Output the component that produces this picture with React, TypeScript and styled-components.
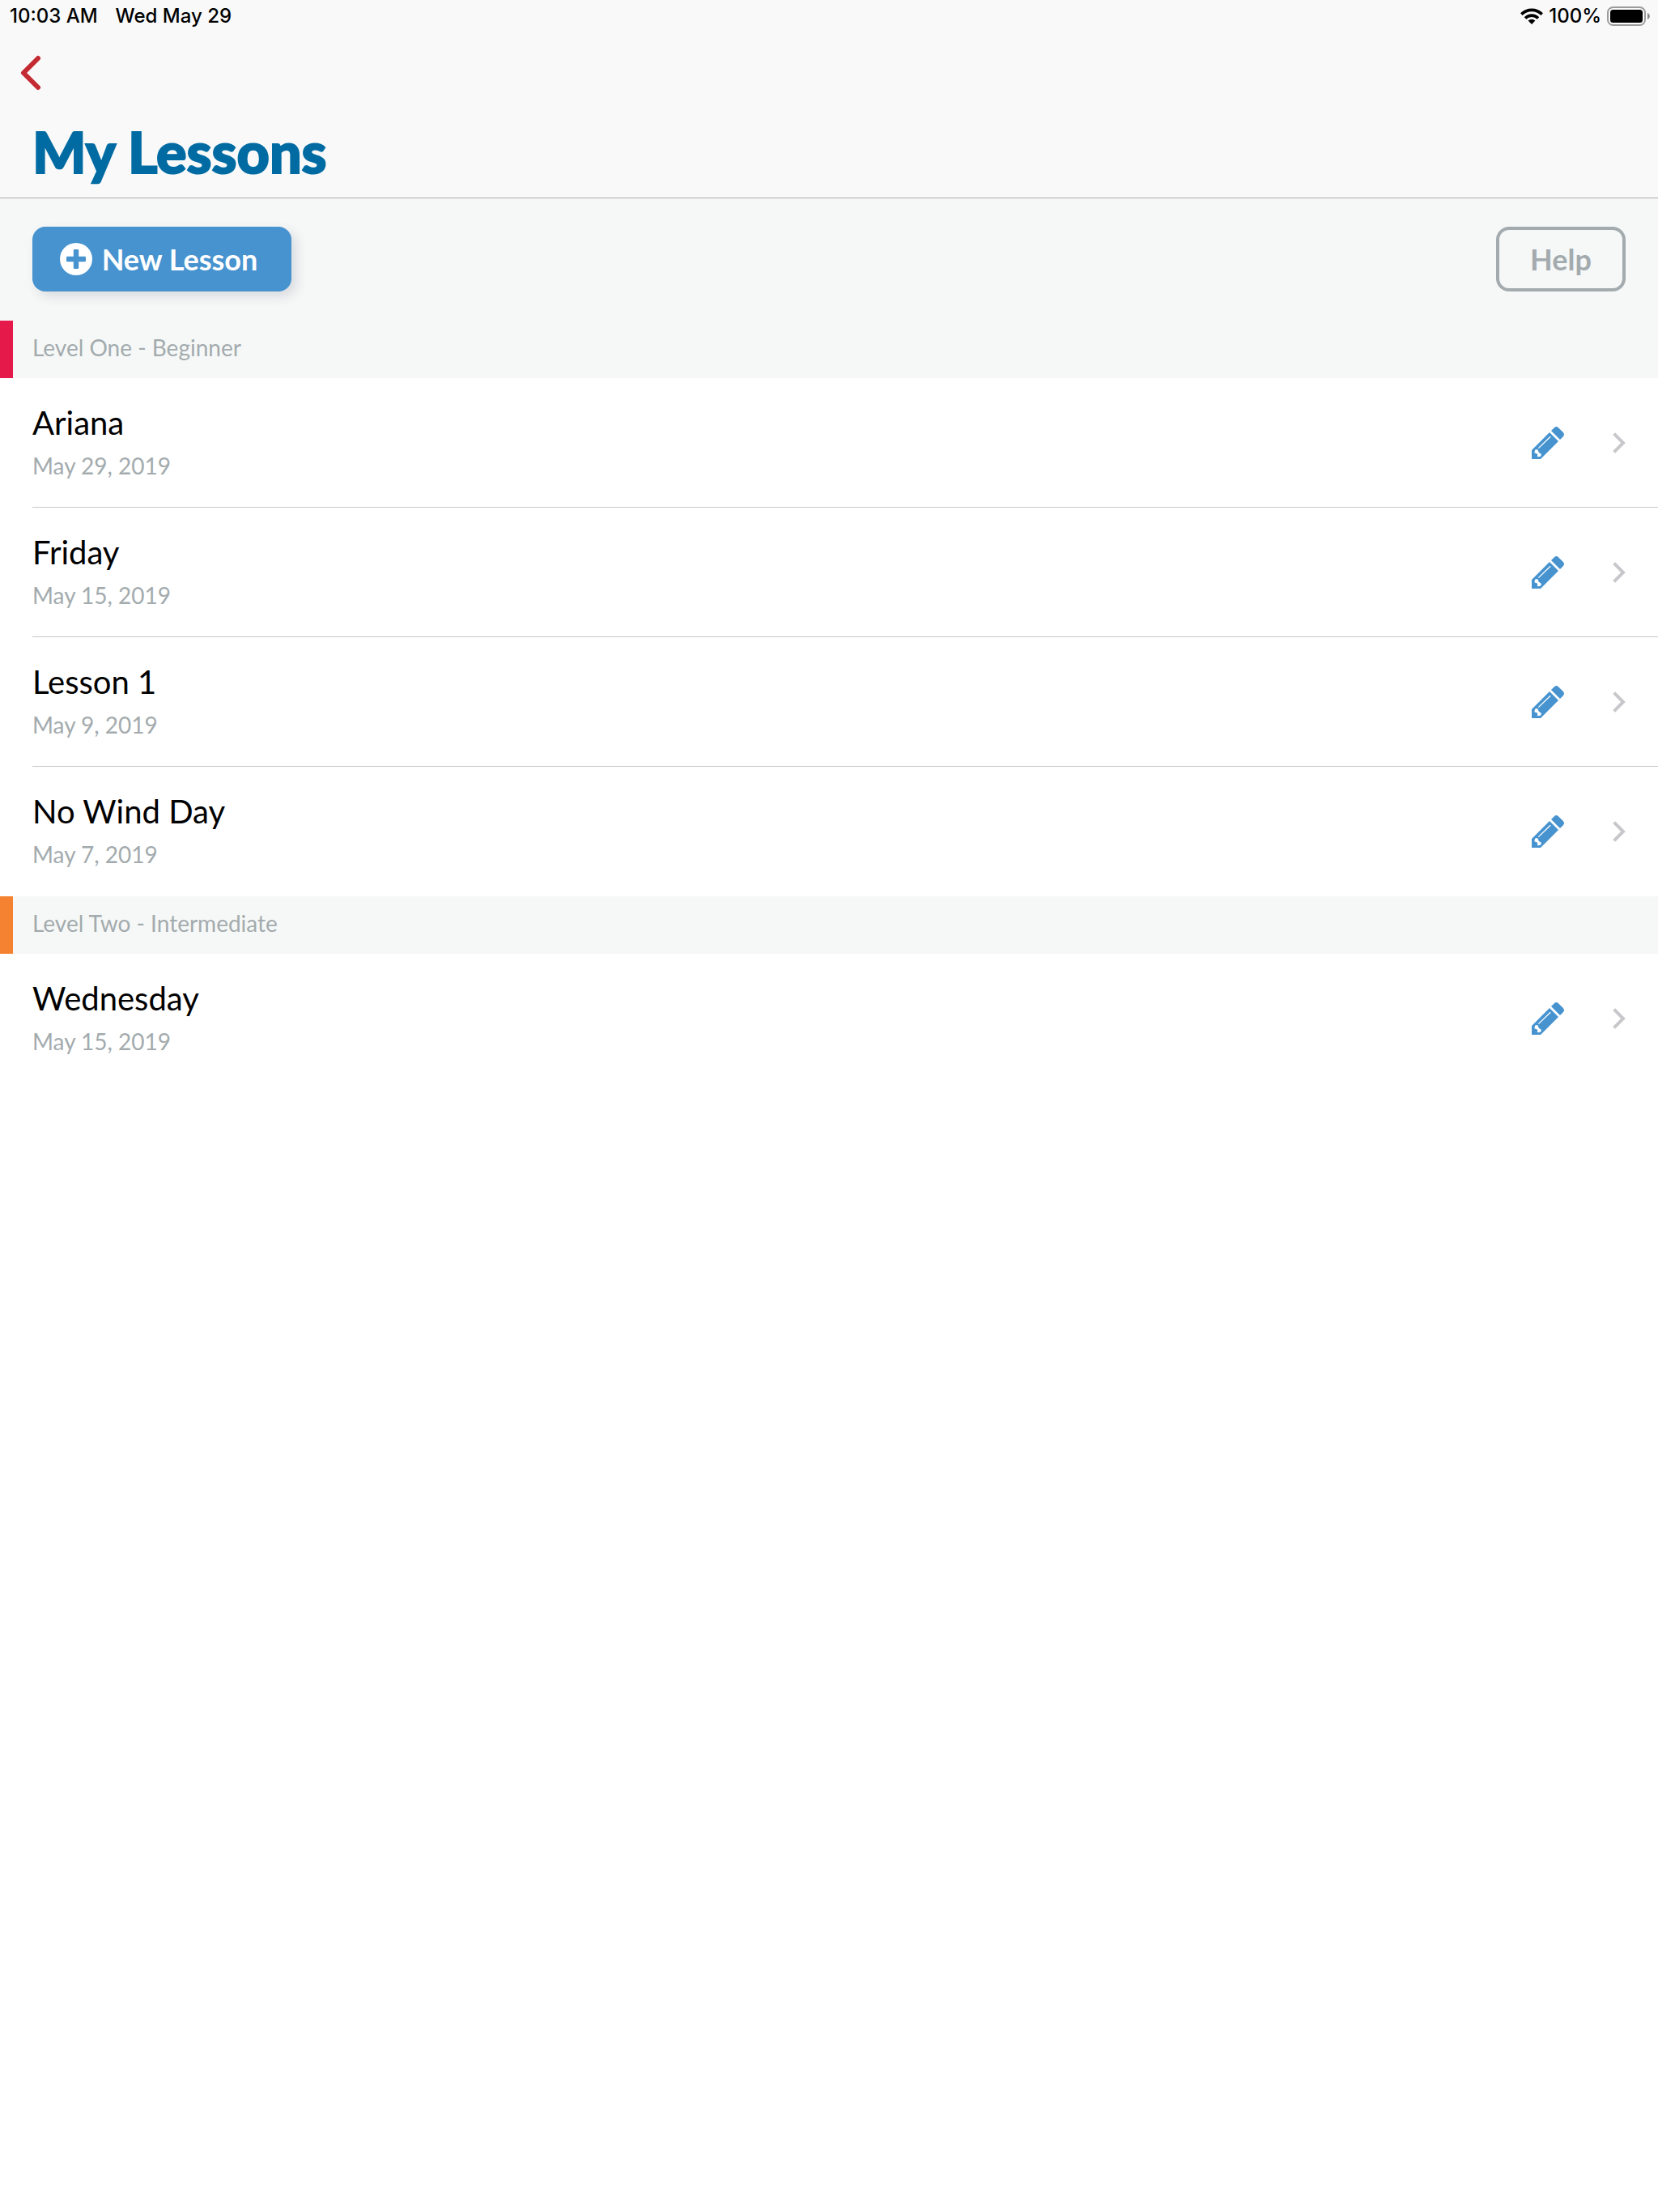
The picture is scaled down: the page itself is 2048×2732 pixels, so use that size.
import React from "react";
import styled, { createGlobalStyle } from "styled-components";

const ink = "#000000";
const muted = "#a3abae";
const blue = "#4693cf";
const mist = "#f6f8f7";

const GlobalStyle = createGlobalStyle`
  *, *::before, *::after { box-sizing: border-box; }
  html, body { margin: 0; padding: 0; background: #ffffff; }
  body { font-family: Lato, "Open Sans", sans-serif; color: ${ink}; }
  h1, h2, h3, p, ul { margin: 0; padding: 0; font-weight: inherit; }
  button { font: inherit; border: 0; padding: 0; background: none; cursor: pointer; }
  svg { display: block; flex: none; }
`;

const Page = styled.div`
  min-height: 100vh;
  background: #ffffff;
`;

const Header = styled.header`
  background: #f9f9f9;
  border-bottom: 1px solid #acacae;
`;

const StatusBar = styled.div`
  display: flex;
  align-items: center;
  justify-content: space-between;
  height: 40px;
  padding: 0 10px 0 12px;
  font-family: Inter, "Liberation Sans", sans-serif;
  font-size: 24px;
  font-weight: 500;
  line-height: 40px;
`;

const StatusGroup = styled.div<{ $gap: number }>`
  display: flex;
  align-items: center;
  gap: ${(p) => p.$gap}px;
`;

const BackButton = styled.button`
  display: flex;
  align-items: center;
  width: 80px;
  height: 100px;
  padding-left: 24px;
`;

const Title = styled.h1`
  padding: 7px 40px 17px;
  color: #006ba2;
  font-size: 70px;
  font-weight: 900;
  line-height: 80px;
  -webkit-text-stroke: 2px #006ba2;
`;

const Toolbar = styled.div`
  display: flex;
  justify-content: space-between;
  padding: 35px 40px 36px;
  background: ${mist};
`;

const ActionButton = styled.button`
  && {
    display: flex;
    align-items: center;
    justify-content: center;
    gap: 12px;
    height: 80px;
    border-radius: 16px;
    font-size: 36px;
    font-weight: 700;
    line-height: 40px;
  }
`;

const PrimaryButton = styled(ActionButton)`
  && {
    width: 320px;
    padding-right: 8px;
    background: ${blue};
    color: #ffffff;
    box-shadow: 6px 6px 14px rgba(60, 70, 100, 0.16);
  }
`;

const OutlineButton = styled(ActionButton)`
  && {
    width: 160px;
    border: 4px solid ${muted};
    color: ${muted};
  }
`;

const LevelHeading = styled.h2<{ $color: string }>`
  height: 71px;
  padding: 16px 24px;
  border-left: 16px solid ${(p) => p.$color};
  background: ${mist};
  color: ${muted};
  font-size: 28px;
  font-weight: 400;
  line-height: 34px;
`;

const LessonList = styled.ul`
  list-style: none;
  padding-left: 40px;
`;

const LessonRow = styled.li`
  display: flex;
  align-items: center;
  gap: 60px;
  height: 160px;
  padding-right: 40px;
  border-bottom: 1px solid #c8c7cc;
  &:last-child { border-bottom-color: transparent; }
`;

const LessonLink = styled.a`
  flex: 1;
  padding-bottom: 4px;
  color: inherit;
  text-decoration: none;
`;

const LessonName = styled.h3`
  font-size: 40px;
  font-weight: 400;
  line-height: 48px;
`;

const LessonDate = styled.p`
  margin-top: 12px;
  color: ${muted};
  font-size: 28px;
  font-weight: 400;
  line-height: 34px;
`;

const IconButton = styled.button`
  display: flex;
`;

const OpenLink = styled.a`
  display: flex;
`;

const BackIcon = () => (
  <svg width="28" height="44" viewBox="0 0 28 44" fill="none" stroke="#c42a31" strokeWidth="6" strokeLinecap="round" strokeLinejoin="round">
    <path d="M23 4 5 22l18 18" />
  </svg>
);

const WifiIcon = () => (
  <svg width="28" height="20" viewBox="0 0 28 20" fill="none" stroke="#000" strokeWidth="3.6">
    <path d="M1.3 7.6a18 18 0 0 1 25.4 0" />
    <path d="M6 12.4a11.3 11.3 0 0 1 16 0" />
    <path d="M14 20l-4.4-4.4a6.3 6.3 0 0 1 8.8 0z" fill="#000" stroke="none" />
  </svg>
);

const BatteryIcon = () => (
  <svg width="53" height="24" viewBox="0 0 53 24">
    <rect x="1" y="1" width="46" height="22" rx="6.5" fill="none" stroke="#9c9c9c" strokeWidth="2" />
    <rect x="4" y="4" width="40" height="16" rx="3.5" fill="#000" />
    <path d="M50 8c3.800 1.500 3.800 6.500 0 8z" fill="#8a8a8a" />
  </svg>
);

const PlusCircleIcon = () => (
  <svg width="40" height="40" viewBox="0 0 40 40">
    <circle cx="20" cy="20" r="20" fill="#fff" />
    <rect x="8" y="16.800" width="24" height="6.400" rx="1.200" fill={blue} />
    <rect x="16.800" y="8" width="6.400" height="24" rx="1.200" fill={blue} />
  </svg>
);

const PencilIcon = () => (
  <svg width="40" height="40" viewBox="0 0 40 40">
    <path d="M0 29 22 7l11 11-22 22H0z" fill={blue} />
    <path d="M24 5l3.600-3.600q2.800-2.800 5.600 0l5.400 5.400q2.800 2.800 0 5.600L35 16z" fill={blue} />
    <path d="M8.300 26.600 23.200 12.300" stroke="#fff" strokeWidth="1.300" />
    <path d="M4.200 28.600 7.200 28l1.600 3.700 3.200 2.300-1 2.700-4 .5.200-3.400-3.900-1.600z" fill="#fff" />
  </svg>
);

const ChevronIcon = () => (
  <svg width="16" height="26" viewBox="0 0 16 26" fill="none" stroke="#c7c7cc" strokeWidth="4">
    <path d="M1.700 1.600 13 13 1.700 24.400" />
  </svg>
);

type Lesson = { name: string; date: string };
type Level = { title: string; color: string; lessons: Lesson[] };

const levels: Level[] = [
  {
    title: "Level One - Beginner",
    color: "#e6194b",
    lessons: [
      { name: "Ariana", date: "May 29, 2019" },
      { name: "Friday", date: "May 15, 2019" },
      { name: "Lesson 1", date: "May 9, 2019" },
      { name: "No Wind Day", date: "May 7, 2019" },
    ],
  },
  {
    title: "Level Two - Intermediate",
    color: "#f58231",
    lessons: [{ name: "Wednesday", date: "May 15, 2019" }],
  },
];

export default function App() {
  return (
    <Page>
      <GlobalStyle />
      <Header>
        <StatusBar>
          <StatusGroup $gap={22}>
            <span>10:03 AM</span>
            <span>Wed May 29</span>
          </StatusGroup>
          <StatusGroup $gap={7}>
            <WifiIcon />
            <span>100%</span>
            <BatteryIcon />
          </StatusGroup>
        </StatusBar>
        <BackButton type="button" aria-label="Back">
          <BackIcon />
        </BackButton>
        <Title>My Lessons</Title>
      </Header>
      <main>
        <Toolbar>
          <PrimaryButton type="button">
            <PlusCircleIcon />
            New Lesson
          </PrimaryButton>
          <OutlineButton type="button">Help</OutlineButton>
        </Toolbar>
        {levels.map((level) => (
          <section key={level.title}>
            <LevelHeading $color={level.color}>{level.title}</LevelHeading>
            <LessonList>
              {level.lessons.map((lesson) => (
                <LessonRow key={lesson.name}>
                  <LessonLink href="#lesson">
                    <LessonName>{lesson.name}</LessonName>
                    <LessonDate>{lesson.date}</LessonDate>
                  </LessonLink>
                  <IconButton type="button" aria-label={`Edit ${lesson.name}`}>
                    <PencilIcon />
                  </IconButton>
                  <OpenLink href="#lesson" aria-label={`Open ${lesson.name}`}>
                    <ChevronIcon />
                  </OpenLink>
                </LessonRow>
              ))}
            </LessonList>
          </section>
        ))}
      </main>
    </Page>
  );
}
